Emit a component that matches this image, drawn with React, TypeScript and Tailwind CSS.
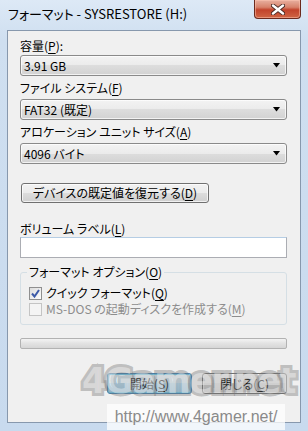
import React from "react";

const jp = { fontFamily: '"Noto Sans CJK JP", "Noto Sans", sans-serif', fontFeatureSettings: '"palt"' } as React.CSSProperties;

function U({ c }: { c: string }) {
  return <span className="underline underline-offset-2 decoration-1">{c}</span>;
}

function Combo({ text }: { text: string }) {
  return (
    <div className="h-[21px] rounded-[3px] border border-[#8a8a8a] bg-[linear-gradient(to_bottom,#f3f3f3_0%,#ebebeb_50%,#dddddd_50%,#d2d2d2_100%)] flex items-center pl-[3px] pr-[5px] shadow-[inset_0_0_0_1px_rgba(255,255,255,0.7)]">
      <span className="text-[12px] leading-none text-black flex-1">{text}</span>
      <svg width="8" height="5" viewBox="0 0 8 5"><path d="M0 0H7L3.5 4.5Z" fill="#000" /></svg>
    </div>
  );
}

export default function App() {
  return (
    <div className="relative w-[308px] h-[431px] overflow-hidden bg-[linear-gradient(to_bottom,#dde9f6_0px,#cfdff0_40px,#c8daee_100%)] flex flex-col" style={jp}>
      {/* title bar */}
      <div className="h-[30px] flex items-start shrink-0">
        <div className="pl-[8px] pt-[6px] text-[13px] leading-[16px] text-black">フォーマット - SYSRESTORE (H:)</div>
        <div className="ml-auto mr-[7px] w-[47px] h-[19px] rounded-b-[4px] border border-t-0 border-[#6b2a1e] bg-[linear-gradient(to_bottom,#e8b0a0_0%,#d7826b_40%,#c2432b_55%,#cf6544_100%)] flex items-center justify-center shadow-[inset_0_0_0_1px_rgba(255,200,180,0.5)]">
          <svg width="14" height="11" viewBox="0 0 14 11">
            <path d="M2 1.5L12 9.5M12 1.5L2 9.5" stroke="#4a2a24" strokeWidth="4.2" strokeLinecap="round" />
            <path d="M2 1.5L12 9.5M12 1.5L2 9.5" stroke="#fff" strokeWidth="2.4" strokeLinecap="round" />
          </svg>
        </div>
      </div>
      {/* inner client area */}
      <div className="flex-1 ml-[7px] mr-[7px] mb-[8px] border border-[#8798ad] bg-[#f0f0f0] flex flex-col pl-[12px] pr-[13px] pt-[7px] text-[12px] leading-[16px] text-black">
        <div className="h-[16px]">容量(<U c="P" />):</div>
        <div className="mt-[1px]"><Combo text="3.91 GB" /></div>
        <div className="h-[16px] mt-[4px]">ファイル システム(<U c="F" />)</div>
        <div className="mt-[3px]"><Combo text="FAT32 (既定)" /></div>
        <div className="h-[16px] mt-[4px]">アロケーション ユニット サイズ(<U c="A" />)</div>
        <div className="mt-[3px]"><Combo text="4096 バイト" /></div>
        <div className="mt-[19px] w-[188px] h-[20px] ml-[1px] rounded-[3px] border border-[#707070] bg-[linear-gradient(to_bottom,#f2f2f2_0%,#ebebeb_50%,#dddddd_50%,#cfcfcf_100%)] flex items-center justify-center shadow-[inset_0_0_0_1px_rgba(255,255,255,0.7)]">
          デバイスの既定値を復元する(<U c="D" />)
        </div>
        <div className="h-[16px] mt-[18px]">ボリューム ラベル(<U c="L" />)</div>
        <div className="h-[21px] border border-[#abadb3] border-t-[#b5cde4] bg-white" />
        <div className="relative mt-[14px] border border-[#d5dfe5] rounded-[3px] pt-[12px] pb-[7px] pl-[8px]">
          <div className="absolute left-[6px] top-[-9px] px-[2px] bg-[#f0f0f0] h-[16px]">フォーマット オプション(<U c="O" />)</div>
          <div className="h-[16px] flex items-center gap-[4px]">
            <div className="w-[13px] h-[13px] border border-[#8f8f8f] bg-[linear-gradient(135deg,#dcdcdc,#fdfdfd)] flex items-center justify-center">
              <svg width="9" height="9" viewBox="0 0 9 9"><path d="M1 4.5L3.5 7.5L8 1" stroke="#3c5aa8" strokeWidth="2" fill="none" /></svg>
            </div>
            <span>クイック フォーマット(<U c="Q" />)</span>
          </div>
          <div className="h-[16px] flex items-center gap-[4px] text-[#8d8d8d]">
            <div className="w-[13px] h-[13px] border border-[#c4c4c4] bg-[#f4f4f4]" />
            <span>MS-DOS の起動ディスクを作成する(<U c="M" />)</span>
          </div>
        </div>
        <div className="mt-[13px] h-[11px] rounded-[2px] border border-[#b2b2b2] bg-[linear-gradient(to_bottom,#f3f3f3,#e2e2e2_50%,#d6d6d6)]" />
        <div className="mt-[24px] flex justify-end gap-[10px]">
          <div className="w-[85px] h-[21px] rounded-[3px] border border-[#3c7fb1] bg-[linear-gradient(to_bottom,#eaf6fd_0%,#d9f0fc_50%,#bee6fd_50%,#a7d9f5_100%)] flex items-center justify-center shadow-[inset_0_0_0_1px_#6fd0f6]">
            開始(<U c="S" />)
          </div>
          <div className="w-[85px] h-[21px] rounded-[3px] border border-[#707070] bg-[linear-gradient(to_bottom,#f2f2f2_0%,#ebebeb_50%,#dddddd_50%,#cfcfcf_100%)] flex items-center justify-center shadow-[inset_0_0_0_1px_rgba(255,255,255,0.7)]">
            閉じる(<U c="C" />)
          </div>
        </div>
      </div>
      {/* watermark */}
      <div
        className="absolute left-[82px] top-[364px] text-[35px] leading-none font-bold tracking-[-1.5px] text-[rgba(255,255,255,0.4)] [-webkit-text-stroke:6px_rgba(120,120,120,0.42)] [paint-order:stroke_fill] pointer-events-none"
        style={{ fontFamily: '"DejaVu Sans", "Liberation Sans", sans-serif' }}
      >
        4Gamer.net
      </div>
      <div
        className="absolute left-[107px] top-[404px] w-[178px] h-[26px] bg-[rgba(255,255,255,0.75)] flex items-center justify-center text-[16px] text-[#8a8a8a] pointer-events-none"
        style={{ fontFamily: '"Liberation Sans", Arial, sans-serif' }}
      >
        http://www.4gamer.net/
      </div>
    </div>
  );
}
